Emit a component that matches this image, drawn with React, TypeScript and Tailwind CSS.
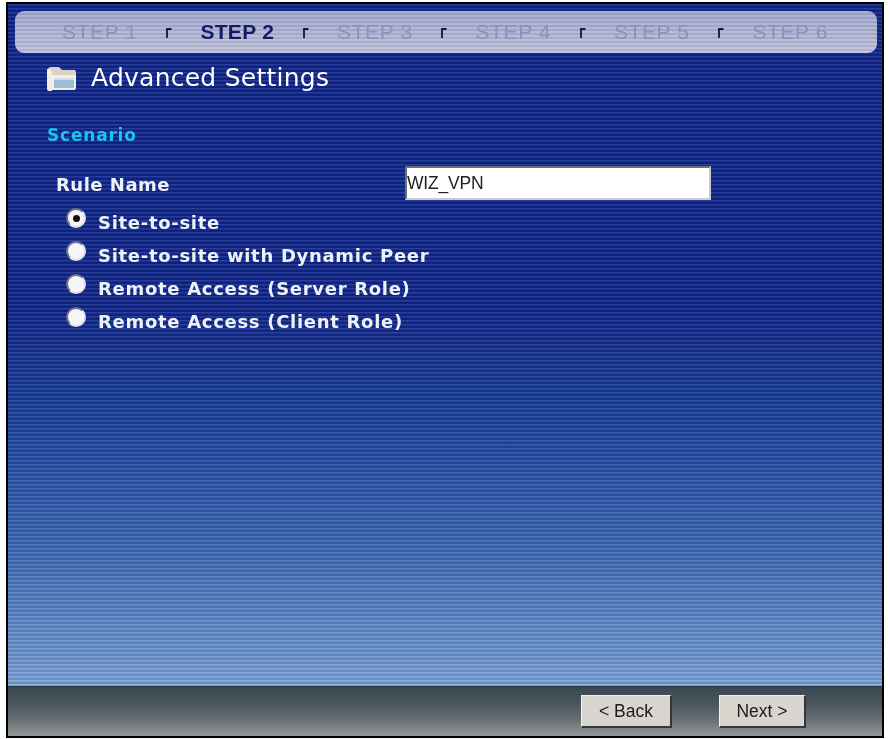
const steps = ["STEP 1", "STEP 2", "STEP 3", "STEP 4", "STEP 5", "STEP 6"];

const options = [
  "Site-to-site",
  "Site-to-site with Dynamic Peer",
  "Remote Access (Server Role)",
  "Remote Access (Client Role)",
];

const Tick = () => (
  <svg width="6" height="11" viewBox="0 0 6 11" className="shrink-0">
    <path d="M1 11V2H5.5" fill="none" stroke="#10183a" strokeWidth="1.8" />
  </svg>
);

const FolderIcon = () => (
  <svg width="30" height="25" viewBox="0 0 30 25" className="shrink-0">
    <path d="M2 4 Q2 1 5 1 H13 L16 4 H28 Q30 4 30 6 V9 H2 Z" fill="#d8d4c6" />
    <path d="M1 4 Q1 2 3 3 Q6 4 6 7 V25 H3 Q1 25 1 23 Z" fill="#f2ede0" />
    <path d="M6 9 H30 V22 Q30 24 28 24 H6 Z" fill="#f0f0e8" />
    <path d="M8 12 H28 V22 H8 Z" fill="#9dbfd6" />
    <path d="M8 12 H28 V14 H8 Z" fill="#cfe0e8" />
  </svg>
);

const Radio = ({ checked }: { checked: boolean }) => (
  <span className="-mt-[10px] flex h-[20px] w-[20px] shrink-0 items-center justify-center rounded-full border-2 border-b-[#dfe3ee] border-l-[#6d7488] border-r-[#dfe3ee] border-t-[#6d7488] bg-[#f4f5f8]">
    {checked && <span className="h-[7px] w-[7px] rounded-full bg-[#101010]" />}
  </span>
);

const NavButton = ({ label, width }: { label: string; width: string }) => (
  <button className={`flex h-[33px] ${width} items-center justify-center border-b-2 border-l border-r-2 border-t border-b-[#33373a] border-l-[#f4f2ee] border-r-[#33373a] border-t-[#f4f2ee] bg-[#d8d4ce] font-['Liberation_Sans',sans-serif] text-[17.5px] text-[#1c1c1c]`}>
    {label}
  </button>
);

export default function App() {
  return (
    <div className="h-[739px] w-[890px] bg-white pb-[1px] pl-[6px] pr-[6px] pt-[2px]">
      <div className="flex h-[736px] w-[878px] flex-col border-2 border-black blur-[0.5px]">
        <div className="flex flex-1 flex-col bg-[repeating-linear-gradient(to_bottom,rgba(255,255,255,0.1)_0px,rgba(255,255,255,0.1)_1px,rgba(0,0,0,0.14)_2px,rgba(0,0,0,0.14)_4px),linear-gradient(to_bottom,#10268f_0%,#10288f_45%,#1f46a4_62%,#3f6cbc_80%,#80a8de_100%)] font-['DejaVu_Sans',sans-serif]">
          <div className="ml-[7px] mr-[5px] mt-[7px] flex h-[42px] items-center justify-between rounded-[9px] bg-[repeating-linear-gradient(to_bottom,rgba(255,255,255,0.1)_0px,rgba(255,255,255,0.1)_2px,rgba(0,0,0,0.07)_2px,rgba(0,0,0,0.07)_4px),linear-gradient(to_bottom,#a0a7d0_0%,#b8bcd8_80%,#bcc0e0_100%)] pl-[47px] pr-[49px]">
            {steps.map((step, i) => (
              <div key={step} className="contents">
                {i > 0 && <Tick />}
                <span
                  className={
                    i === 1
                      ? "font-['Liberation_Sans',sans-serif] text-[21px] font-bold tracking-[0.3px] text-[#111c66]"
                      : "font-['Liberation_Sans',sans-serif] text-[21px] tracking-[0.6px] text-[#8a94b8]"
                  }
                >
                  {step}
                </span>
              </div>
            ))}
          </div>

          <div className="ml-[38px] mt-[12px] flex h-[26px] items-center gap-[15px]">
            <FolderIcon />
            <h1 className="text-[25px] leading-[26px] tracking-[0.25px] text-white">Advanced Settings</h1>
          </div>

          <p className="ml-[39px] mt-[34px] text-[17px] font-bold leading-[20px] tracking-[0.8px] text-[#19c4f0]">Scenario</p>

          <div className="ml-[48px] mt-[21px] flex h-[34px] items-center">
            <span className="mt-[3px] w-[349px] text-[18px] font-bold tracking-[0.5px] text-[#eef2f8]">Rule Name</span>
            <div className="flex h-[34px] w-[306px] items-center border-2 border-b-[#c8cbd6] border-l-[#6a6f80] border-r-[#c8cbd6] border-t-[#6a6f80] bg-white font-['Liberation_Sans',sans-serif] text-[17.5px] tracking-[-0.2px] text-[#222]">
              WIZ_VPN
            </div>
          </div>

          <div className="ml-[58px] mt-[13px] flex flex-col gap-[13px]">
            {options.map((option, i) => (
              <label key={option} className="flex h-[20px] items-center gap-[12px] text-[18px] font-bold leading-[20px] tracking-[0.7px] text-[#eef2f8]">
                <Radio checked={i === 0} />
                {option}
              </label>
            ))}
          </div>
        </div>

        <div className="flex h-[50px] items-center justify-end gap-[47px] border-t border-[#2a3540] bg-[linear-gradient(to_bottom,#3b4953_0%,#4a555c_35%,#6e7376_70%,#92979a_100%)] pr-[76px]">
          <NavButton label="< Back" width="w-[91px]" />
          <NavButton label="Next >" width="w-[87px]" />
        </div>
      </div>
    </div>
  );
}
